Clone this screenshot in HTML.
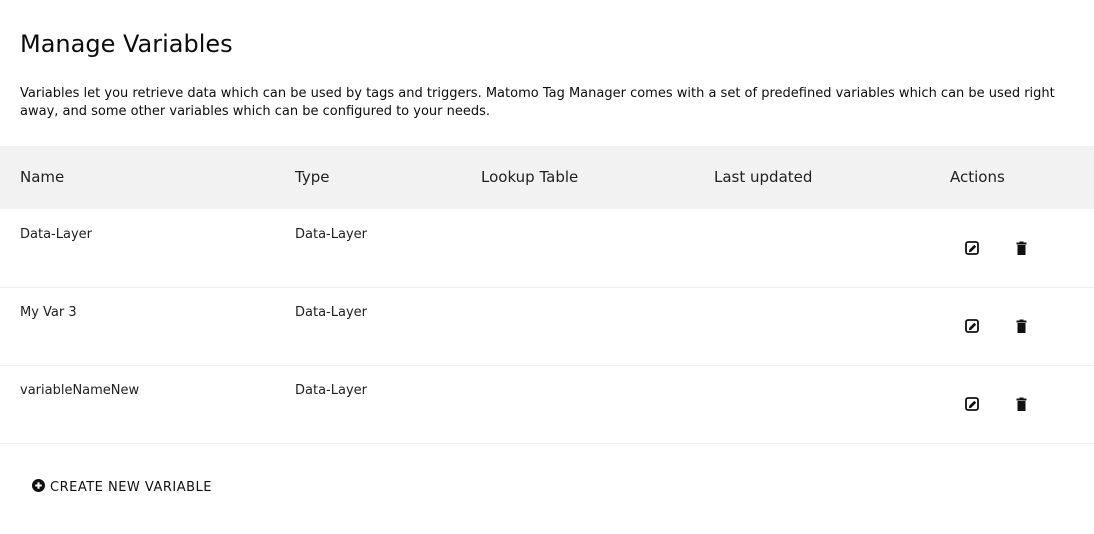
<!DOCTYPE html>
<html><head><meta charset="utf-8"><style>
*{margin:0;padding:0;box-sizing:border-box}
body{width:1094px;height:534px;background:#fff;font-family:"DejaVu Sans","Liberation Sans",sans-serif;color:#212121;position:relative;overflow:hidden}
.a{position:absolute;white-space:nowrap}
h1{position:absolute;left:20px;top:30px;font-size:24px;font-weight:normal;color:#0d0d0d}
.desc{position:absolute;left:20px;top:85px;width:1060px;font-size:13px;line-height:18px;color:#0d0d0d}
.head{position:absolute;left:0;top:146px;width:1094px;height:63px;background:#f2f2f2}
.h{font-size:15px;top:168px;color:#212121}
.r{font-size:13px;color:#212121}
.line{position:absolute;left:0;width:1094px;height:1px;background:#eee}
</style></head><body>
<h1>Manage Variables</h1>
<div class="desc">Variables let you retrieve data which can be used by tags and triggers. Matomo Tag Manager comes with a set of predefined variables which can be used right away, and some other variables which can be configured to your needs.</div>
<div class="head"></div>
<div class="a h" style="left:20px">Name</div>
<div class="a h" style="left:295px">Type</div>
<div class="a h" style="left:481px">Lookup Table</div>
<div class="a h" style="left:714px">Last updated</div>
<div class="a h" style="left:950px">Actions</div>

<div class="a r" style="left:20px;top:227px">Data-Layer</div>
<div class="a r" style="left:295px;top:227px">Data-Layer</div>
<div class="line" style="top:287px"></div>
<div class="a r" style="left:20px;top:305px">My Var 3</div>
<div class="a r" style="left:295px;top:305px">Data-Layer</div>
<div class="line" style="top:365px"></div>
<div class="a r" style="left:20px;top:383px">variableNameNew</div>
<div class="a r" style="left:295px;top:383px">Data-Layer</div>
<div class="line" style="top:443px"></div>

<svg class="a" style="left:965px;top:241px" width="15" height="15" viewBox="0 0 15 15"><rect x="1" y="1" width="12" height="12" rx="2" fill="none" stroke="#111" stroke-width="1.8"/><path d="M3.8 11.2 L4.3 8.8 L9.3 3.8 L11.2 5.7 L6.2 10.7 Z" fill="#111"/></svg>
<svg class="a" style="left:1016px;top:241px" width="12" height="14" viewBox="0 0 12 14"><rect x="0.5" y="1.5" width="10" height="2" fill="#111"/><rect x="3.5" y="0.5" width="4" height="1.5" fill="#111"/><rect x="1.5" y="4" width="8" height="10" fill="#111"/></svg>
<svg class="a" style="left:965px;top:319px" width="15" height="15" viewBox="0 0 15 15"><rect x="1" y="1" width="12" height="12" rx="2" fill="none" stroke="#111" stroke-width="1.8"/><path d="M3.8 11.2 L4.3 8.8 L9.3 3.8 L11.2 5.7 L6.2 10.7 Z" fill="#111"/></svg>
<svg class="a" style="left:1016px;top:319px" width="12" height="14" viewBox="0 0 12 14"><rect x="0.5" y="1.5" width="10" height="2" fill="#111"/><rect x="3.5" y="0.5" width="4" height="1.5" fill="#111"/><rect x="1.5" y="4" width="8" height="10" fill="#111"/></svg>
<svg class="a" style="left:965px;top:397px" width="15" height="15" viewBox="0 0 15 15"><rect x="1" y="1" width="12" height="12" rx="2" fill="none" stroke="#111" stroke-width="1.8"/><path d="M3.8 11.2 L4.3 8.8 L9.3 3.8 L11.2 5.7 L6.2 10.7 Z" fill="#111"/></svg>
<svg class="a" style="left:1016px;top:397px" width="12" height="14" viewBox="0 0 12 14"><rect x="0.5" y="1.5" width="10" height="2" fill="#111"/><rect x="3.5" y="0.5" width="4" height="1.5" fill="#111"/><rect x="1.5" y="4" width="8" height="10" fill="#111"/></svg>

<svg class="a" style="left:32px;top:479px" width="13" height="13" viewBox="0 0 14 14"><circle cx="7" cy="7" r="7" fill="#111"/><path d="M7 3.5v7M3.5 7h7" stroke="#fff" stroke-width="2.2"/></svg>
<div class="a" style="left:50px;top:480px;font-size:13px;letter-spacing:0.5px;color:#111">CREATE NEW VARIABLE</div>
</body></html>
